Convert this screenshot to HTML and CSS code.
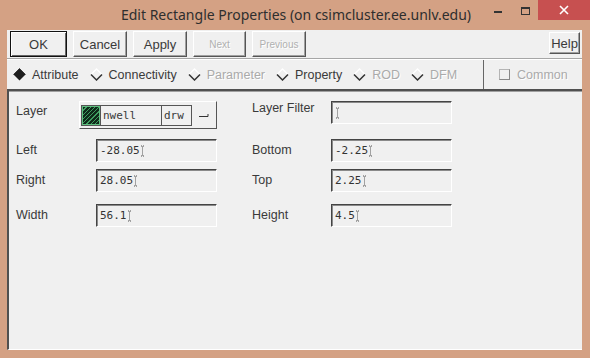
FILE: index.html
```html
<!DOCTYPE html>
<html lang="en">
    <head>
        <meta charset="UTF-8">
        <title>Edit Rectangle Properties</title>
        <link rel="stylesheet" href="styles.css">
    </head>
<body>
    <div class="window">
        <div class="titlebar">
            <div class="title">Edit Rectangle Properties (on csimcluster.ee.unlv.edu)</div>
            <div class="controls">
                <span class="ctl-min"></span>
                <span class="ctl-max"></span>
                <span class="ctl-close">
                    <svg width="10" height="10" viewBox="0 0 10 10"><path d="M1 1L9 9M9 1L1 9" stroke="#fff" stroke-width="1.6"/></svg>
                </span>
            </div>
        </div>

        <div class="client">
            <div class="toolbar">
                <button class="btn default w57">OK</button>
                <button class="btn w54">Cancel</button>
                <button class="btn w54">Apply</button>
                <button class="btn w53 disabled">Next</button>
                <button class="btn w54 disabled">Previous</button>
                <button class="btn help">Help</button>
            </div>

            <div class="tabs">
                <div class="tab-group">
                    <span class="radio">
                        <svg width="13" height="13" viewBox="0 0 13 13"><path d="M6.5 0.5L12.5 6.5L6.5 12.5L0.5 6.5Z" fill="#1e1e1e"/><path d="M0.5 6.5L6.5 0.5L12.5 6.5" fill="none" stroke="#3a3a3a"/></svg>
                        Attribute
                    </span>
                    <span class="radio">
                        <svg width="13" height="13" viewBox="0 0 13 13"><path d="M1 6.5L6.5 1L12 6.5" fill="none" stroke="#fff" stroke-width="1.3"/><path d="M1 6.5L6.5 12L12 6.5" fill="none" stroke="#333" stroke-width="1.5"/></svg>
                        Connectivity
                    </span>
                    <span class="radio disabled">
                        <svg width="13" height="13" viewBox="0 0 13 13"><path d="M1 6.5L6.5 1L12 6.5" fill="none" stroke="#fff" stroke-width="1.3"/><path d="M1 6.5L6.5 12L12 6.5" fill="none" stroke="#333" stroke-width="1.5"/></svg>
                        Parameter
                    </span>
                    <span class="radio">
                        <svg width="13" height="13" viewBox="0 0 13 13"><path d="M1 6.5L6.5 1L12 6.5" fill="none" stroke="#fff" stroke-width="1.3"/><path d="M1 6.5L6.5 12L12 6.5" fill="none" stroke="#333" stroke-width="1.5"/></svg>
                        Property
                    </span>
                    <span class="radio disabled">
                        <svg width="13" height="13" viewBox="0 0 13 13"><path d="M1 6.5L6.5 1L12 6.5" fill="none" stroke="#fff" stroke-width="1.3"/><path d="M1 6.5L6.5 12L12 6.5" fill="none" stroke="#333" stroke-width="1.5"/></svg>
                        ROD
                    </span>
                    <span class="radio disabled">
                        <svg width="13" height="13" viewBox="0 0 13 13"><path d="M1 6.5L6.5 1L12 6.5" fill="none" stroke="#fff" stroke-width="1.3"/><path d="M1 6.5L6.5 12L12 6.5" fill="none" stroke="#333" stroke-width="1.5"/></svg>
                        DFM
                    </span>
                </div>
                <div class="common disabled">
                    <span class="check"></span>
                    Common
                </div>
            </div>

            <div class="panel">
                <div class="form">
                    <div class="label span2 r1 top">Layer</div>
                    <div class="layer-pick r1">
                        <div class="layer-box">
                            <span class="swatch"></span>
                            <span class="cell nwell">nwell</span>
                            <span class="cell drw">drw</span>
                        </div>
                        <svg class="drop" width="10" height="6" viewBox="0 0 10 6"><path d="M0 4.5H9V2" fill="none" stroke="#333"/></svg>
                    </div>
                    <div class="label c5 r1 filter">Layer Filter</div>
                    <div class="field c6 r1"><svg class="caret" width="5" height="12" viewBox="0 0 5 12"><path d="M2.5 1.5V10.5" stroke="#555" stroke-dasharray="1 1"/><path d="M1 1h1M3 1h1M1 11h1M3 11h1" stroke="#555"/></svg></div>

                    <div class="label span2 r2">Left</div>
                    <div class="field c3 r2">-28.05<svg class="caret" width="5" height="12" viewBox="0 0 5 12"><path d="M2.5 1.5V10.5" stroke="#555" stroke-dasharray="1 1"/><path d="M1 1h1M3 1h1M1 11h1M3 11h1" stroke="#555"/></svg></div>
                    <div class="label c5 r2">Bottom</div>
                    <div class="field c6 r2">-2.25<svg class="caret" width="5" height="12" viewBox="0 0 5 12"><path d="M2.5 1.5V10.5" stroke="#555" stroke-dasharray="1 1"/><path d="M1 1h1M3 1h1M1 11h1M3 11h1" stroke="#555"/></svg></div>

                    <div class="label span2 r3">Right</div>
                    <div class="field c3 r3">28.05<svg class="caret" width="5" height="12" viewBox="0 0 5 12"><path d="M2.5 1.5V10.5" stroke="#555" stroke-dasharray="1 1"/><path d="M1 1h1M3 1h1M1 11h1M3 11h1" stroke="#555"/></svg></div>
                    <div class="label c5 r3">Top</div>
                    <div class="field c6 r3">2.25<svg class="caret" width="5" height="12" viewBox="0 0 5 12"><path d="M2.5 1.5V10.5" stroke="#555" stroke-dasharray="1 1"/><path d="M1 1h1M3 1h1M1 11h1M3 11h1" stroke="#555"/></svg></div>

                    <div class="label span2 r4">Width</div>
                    <div class="field c3 r4">56.1<svg class="caret" width="5" height="12" viewBox="0 0 5 12"><path d="M2.5 1.5V10.5" stroke="#555" stroke-dasharray="1 1"/><path d="M1 1h1M3 1h1M1 11h1M3 11h1" stroke="#555"/></svg></div>
                    <div class="label c5 r4">Height</div>
                    <div class="field c6 r4">4.5<svg class="caret" width="5" height="12" viewBox="0 0 5 12"><path d="M2.5 1.5V10.5" stroke="#555" stroke-dasharray="1 1"/><path d="M1 1h1M3 1h1M1 11h1M3 11h1" stroke="#555"/></svg></div>
                </div>
            </div>
        </div>
    </div>
</body>
</html>
```

FILE: styles.css
```css
body {
    margin: 0;
    padding: 0;
    background-color: #d4a184;
    font-family: "Liberation Sans", Arial, sans-serif;
    color: #3a3a3a;
}
.window {
    height: 358px;
    display: flex;
    flex-direction: column;
}

/* barre de titre */
.titlebar {
    height: 30px;
    display: flex;
    flex-shrink: 0;
}
.title {
    flex: 1;
    padding-left: 98px;
    text-align: center;
    line-height: 30px;
    font-family: "Noto Sans", sans-serif;
    font-size: 14px;
    color: #2e2e2e;
}
.controls {
    display: flex;
    align-items: flex-start;
}
.ctl-min {
    width: 8px;
    height: 2px;
    margin-top: 11px;
    margin-right: 19px;
    background-color: #333;
}
.ctl-max {
    width: 7px;
    height: 5px;
    margin-top: 7px;
    margin-right: 8px;
    border: 1px solid #333;
    border-top-width: 2px;
}
.ctl-close {
    width: 52px;
    height: 20px;
    background-color: #c75050;
    display: flex;
    align-items: center;
    justify-content: center;
}

/* zone client */
.client {
    flex: 1;
    margin: 0 8px 8px 7px;
    background-color: #f0f0f0;
    display: flex;
    flex-direction: column;
}
.toolbar {
    height: 27px;
    padding: 1px 2px 0 3px;
    display: flex;
    align-items: flex-start;
    gap: 6px;
    border-bottom: 1px solid #a6a6a6;
    box-shadow: 0 1px 0 #fff;
}
.btn {
    height: 26px;
    padding: 0;
    background-color: #f0f0f0;
    border: 1px solid;
    border-color: #fff #555 #555 #fff;
    box-shadow: inset -1px -1px 0 #a0a0a0;
    font-family: "Liberation Sans", Arial, sans-serif;
    font-size: 13px;
    color: #3a3a3a;
}
.btn.default {
    border-color: #111;
    box-shadow: inset 1px 1px 0 #fff, inset -1px -1px 0 #666;
}
.btn.disabled {
    font-size: 10px;
    color: #b0b0b0;
    text-shadow: 1px 1px 0 #fff;
}
.w57 { width: 57px; }
.w54 { width: 54px; }
.w53 { width: 53px; }
.btn.help {
    width: 31px;
    height: 22px;
    margin-left: auto;
    margin-top: 1px;
}

/* ligne des onglets */
.tabs {
    height: 29px;
    margin-top: 1px;
    display: flex;
}
.tab-group {
    flex: 1;
    display: flex;
    align-items: center;
    gap: 11px;
    padding-left: 6px;
    font-size: 12.5px;
}
.radio {
    display: flex;
    align-items: center;
    gap: 6px;
}
.disabled {
    color: #aaa;
    text-shadow: 1px 1px 0 #fff;
}
.common {
    width: 83px;
    padding-left: 15px;
    display: flex;
    align-items: center;
    gap: 7px;
    border-left: 1px solid #666;
    font-size: 12.5px;
}
.check {
    width: 9px;
    height: 9px;
    border: 1px solid #888;
    border-top-color: #b4b4b4;
    border-left-color: #b4b4b4;
}

/* panneau */
.panel {
    flex: 1;
    border-top: 2px solid #505050;
    border-left: 2px solid #505050;
    border-bottom: 1px solid #fff;
    box-shadow: inset 0 1px 0 #a0a0a0;
    padding: 10px 0 0 7px;
}
.form {
    display: grid;
    grid-template-columns: 63px 17px 121px 35px 79px 121px;
    grid-template-rows: 38px 30px 35px 23px;
    align-items: start;
}
.label {
    font-size: 12.5px;
    line-height: 23px;
    color: #3a3a3a;
}
.label.top { line-height: 20px; }
.label.filter { line-height: 14px; }
.span2 { grid-column: 1 / 3; }
.c3 { grid-column: 3; }
.c5 { grid-column: 5; }
.c6 { grid-column: 6; }
.r1 { grid-row: 1; }
.r2 { grid-row: 2; }
.r3 { grid-row: 3; }
.r4 { grid-row: 4; }
.field {
    height: 23px;
    box-sizing: border-box;
    border-top: 1px solid #444;
    border-left: 1px solid #444;
    border-bottom: 1px solid #fff;
    border-right: 1px solid #fff;
    box-shadow: inset 1px 1px 0 #8a8a8a;
    padding-left: 3px;
    display: flex;
    align-items: center;
    font-family: "DejaVu Sans Mono", monospace;
    font-size: 11px;
    color: #333;
}
.layer-pick {
    grid-column: 2 / 4;
    height: 28px;
    box-sizing: border-box;
    border: 1px solid;
    border-color: #fff #555 #555 #fff;
    padding-left: 1px;
    display: flex;
    align-items: center;
}
.layer-box {
    height: 21px;
    box-sizing: border-box;
    border: 1px solid #555;
    display: flex;
}
.swatch {
    width: 18px;
    box-sizing: border-box;
    border: 1px solid #5fbf80;
    background: repeating-linear-gradient(135deg, #0f2a1a 0 2px, #3f9e60 2px 3px);
}
.cell {
    border-left: 1px solid #555;
    font-family: "DejaVu Sans Mono", monospace;
    font-size: 11px;
    line-height: 19px;
    padding-left: 2px;
    box-sizing: border-box;
}
.nwell { width: 61px; }
.drw { width: 30px; }
.drop {
    margin-left: 7px;
}
```
